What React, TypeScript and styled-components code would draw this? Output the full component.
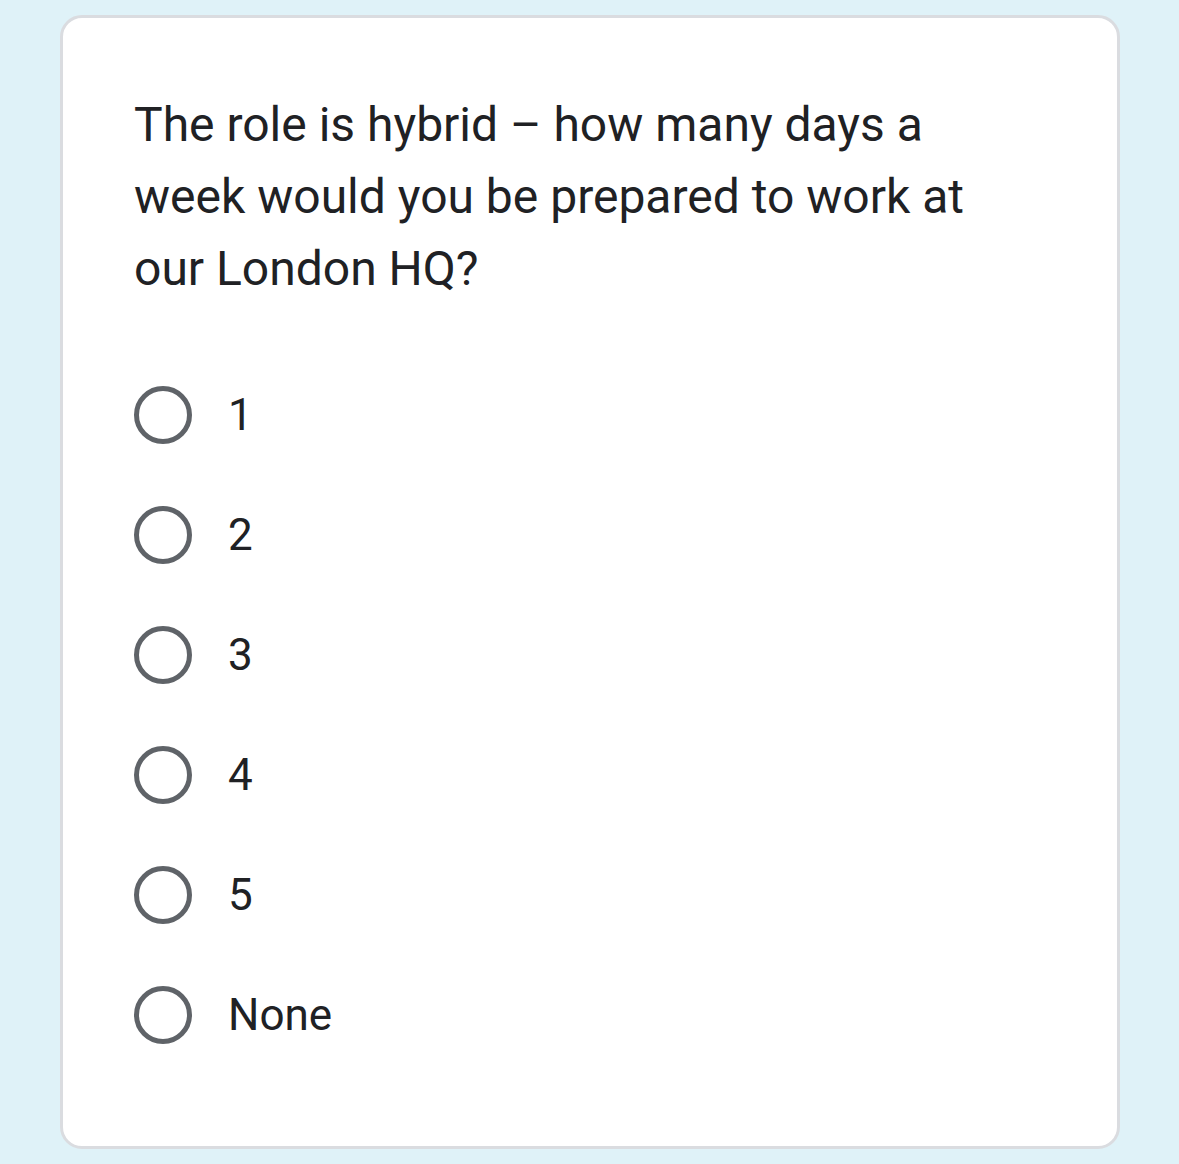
import styled, {createGlobalStyle} from "styled-components";

const GlobalStyle = createGlobalStyle`
  html, body {
    margin: 0;
    padding: 0;
    background: #dff2f8;
  }
  body {
    font-family: Roboto, "Liberation Sans", sans-serif;
  }
`

const Page = styled.div`
  width: 1179px;
  height: 1164px;
  padding: 15px 0 0 60px;
  box-sizing: border-box;
`

const Card = styled.div`
  width: 1060px;
  height: 1134px;
  box-sizing: border-box;
  background: #ffffff;
  border: 3px solid #dadce0;
  border-radius: 22px;
  padding: 71px 72px 0 71px;
`

const Question = styled.div`
  font-size: 48px;
  line-height: 72px;
  color: #202124;
  width: 860px;
  margin-bottom: 50px;
`

const Options = styled.div`
  display: flex;
  flex-direction: column;
`

const Option = styled.label`
  display: flex;
  align-items: center;
  height: 120px;
  gap: 36px;
  cursor: pointer;
`

const Radio = styled.span`
  width: 58px;
  height: 58px;
  box-sizing: border-box;
  border: 5px solid #5f6368;
  border-radius: 50%;
  flex-shrink: 0;
`

const OptionText = styled.span`
  font-size: 44px;
  color: #202124;
`

const options = ["1", "2", "3", "4", "5", "None"]

const App = () => {
    return (
        <>
            <GlobalStyle/>
            <Page>
                <Card>
                    <Question>
                        The role is hybrid – how many days a week would you be prepared to work at our London HQ?
                    </Question>
                    <Options>
                        {options.map((o) => (
                            <Option key={o}>
                                <Radio/>
                                <OptionText>{o}</OptionText>
                            </Option>
                        ))}
                    </Options>
                </Card>
            </Page>
        </>
    )
}

export default App
